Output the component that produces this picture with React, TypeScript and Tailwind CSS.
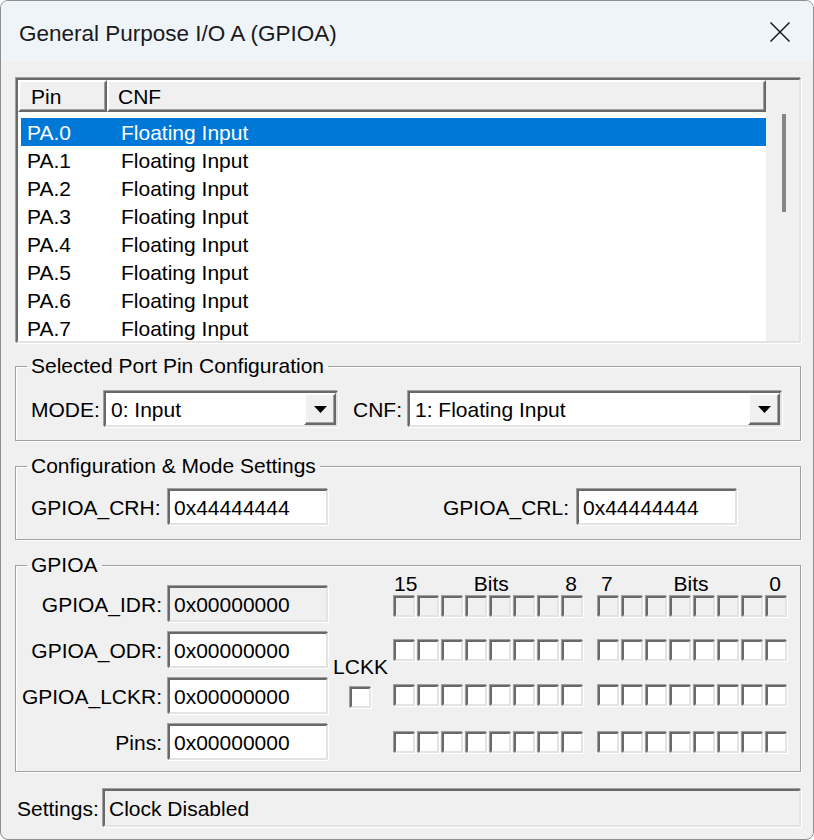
import React from "react";

const sunken =
  "border-2 border-t-[#696969] border-l-[#696969] border-b-[#e3e3e3] border-r-[#e3e3e3] shadow-[-1px_-1px_0_#a0a0a0,1px_1px_0_#ffffff]";
const raised =
  "border-2 border-t-white border-l-white border-b-[#696969] border-r-[#696969] shadow-[inset_-1px_-1px_0_#a0a0a0]";
const group =
  "border border-[#a0a0a0] shadow-[inset_1px_1px_0_#ffffff,1px_1px_0_#ffffff]";

const pins = ["PA.0", "PA.1", "PA.2", "PA.3", "PA.4", "PA.5", "PA.6", "PA.7"];

function TextBox({ value, gray = false, className = "" }: { value: string; gray?: boolean; className?: string }) {
  return (
    <div className={`${sunken} ${gray ? "bg-[#f0f0f0]" : "bg-white"} h-[36px] flex items-center pl-[4px] ${className}`}>
      {value}
    </div>
  );
}

function Combo({ value, className = "" }: { value: string; className?: string }) {
  return (
    <div className={`${sunken} bg-white h-[36px] flex items-stretch ${className}`}>
      <div className="flex-1 flex items-center pl-[5px]">{value}</div>
      <div className={`${raised} w-[32px] bg-[#f0f0f0] flex items-center justify-center`}>
        <svg width="13" height="7" viewBox="0 0 13 7">
          <polygon points="0,0 13,0 6.5,7" fill="#000" />
        </svg>
      </div>
    </div>
  );
}

function Check({ gray = false }: { gray?: boolean }) {
  return <div className={`${sunken} ${gray ? "bg-[#f0f0f0]" : "bg-white"} w-[21px] h-[21px]`} />;
}

function BitRow({ gray = false, className = "" }: { gray?: boolean; className?: string }) {
  return (
    <div className={`flex ${className}`}>
      <div className="flex gap-[3px]">
        {Array.from({ length: 8 }).map((_, i) => (
          <Check key={i} gray={gray} />
        ))}
      </div>
      <div className="flex gap-[3px] ml-[15px]">
        {Array.from({ length: 8 }).map((_, i) => (
          <Check key={i} gray={gray} />
        ))}
      </div>
    </div>
  );
}

export default function App() {
  return (
    <div className="w-[814px] h-[840px] overflow-hidden rounded-lg border border-[#8f8f8f] bg-[#f0f0f0] font-['Liberation_Sans',Arial,sans-serif] text-[21px] text-black leading-none">
      {/* title bar */}
      <div className="h-[61px] bg-[#eff4f9] flex items-center justify-between pl-[18px] pr-[22px]">
        <span className="mt-[5px] text-[22.5px] text-[#1a1a1a]">General Purpose I/O A (GPIOA)</span>
        <svg width="22" height="22" viewBox="0 0 22 22">
          <path d="M1.5 1.5 L20.5 20.5 M20.5 1.5 L1.5 20.5" stroke="#1a1a1a" strokeWidth="1.5" fill="none" />
        </svg>
      </div>

      <div className="pl-[14px] flex flex-col items-start">
        {/* pin list */}
        <div className={`${sunken} ml-[1px] mt-[16px] w-[785px] h-[265px] bg-white flex overflow-hidden`}>
          <div className="w-[748px] flex flex-col overflow-hidden">
            <div className="h-[32px] flex shrink-0 bg-[#f0f0f0]">
              <div className={`${raised} w-[89px] flex items-center pl-[11px]`}>Pin</div>
              <div className={`${raised} flex-1 flex items-center pl-[9px]`}>CNF</div>
            </div>
            <div className="pt-[6px] pl-[3px]">
              {pins.map((p, i) => (
                <div
                  key={p}
                  className={`h-[28px] w-[745px] flex items-center ${i === 0 ? "bg-[#0078d7] text-white" : ""}`}
                >
                  <span className="w-[100px] pl-[6px]">{p}</span>
                  <span>Floating Input</span>
                </div>
              ))}
            </div>
          </div>
          <div className="w-[33px] bg-[#f0f0f0]">
            <div className="mt-[34px] ml-[16px] w-[4px] h-[98px] bg-[#858585]" />
          </div>
        </div>

        {/* selected port pin configuration */}
        <fieldset className={`${group} mt-[11px] w-[786px]`}>
          <legend className="ml-[11px] px-[4px] leading-[24px]">Selected Port Pin Configuration</legend>
          <div className="flex items-center pl-[15px] pt-[13px] pb-[13px]">
            <span className="w-[73px]">MODE:</span>
            <Combo value="0: Input" className="w-[234px]" />
            <span className="ml-[15px] w-[55px]">CNF:</span>
            <Combo value="1: Floating Input" className="w-[374px]" />
          </div>
        </fieldset>

        {/* configuration & mode settings */}
        <fieldset className={`${group} mt-[13px] w-[786px]`}>
          <legend className="ml-[11px] px-[4px] leading-[24px]">Configuration &amp; Mode Settings</legend>
          <div className="flex items-center pl-[15px] pt-[11px] pb-[14px]">
            <span className="w-[137px]">GPIOA_CRH:</span>
            <TextBox value="0x44444444" className="w-[160px]" />
            <span className="ml-[115px] w-[134px]">GPIOA_CRL:</span>
            <TextBox value="0x44444444" className="w-[160px]" />
          </div>
        </fieldset>

        {/* GPIOA */}
        <fieldset className={`${group} mt-[13px] w-[786px]`}>
          <legend className="ml-[11px] px-[4px] leading-[24px]">GPIOA</legend>
          <div className="flex items-start pb-[11px]">
            <div className="flex flex-col gap-[10px] pt-[9px]">
              {[
                ["GPIOA_IDR:", true],
                ["GPIOA_ODR:", false],
                ["GPIOA_LCKR:", false],
                ["Pins:", false],
              ].map(([label, gray]) => (
                <div key={label as string} className="flex items-center">
                  <span className="w-[146px] text-right">{label as string}</span>
                  <TextBox value="0x00000000" gray={gray as boolean} className="ml-[6px] w-[160px]" />
                </div>
              ))}
            </div>

            <div className="ml-[5px] w-[55px] flex flex-col items-center pt-[79px]">
              <span className="leading-[21px]">LCKK</span>
              <div className="mt-[10px]">
                <Check />
              </div>
            </div>

            <div className="ml-[6px] -mt-[5px] flex flex-col">
              <div className="h-[22px] flex items-center">
                <div className="w-[189px] flex justify-between pr-[6px]">
                  <span>15</span>
                  <span>Bits</span>
                  <span>8</span>
                </div>
                <div className="w-[189px] ml-[15px] flex justify-between pl-[3px] pr-[6px]">
                  <span>7</span>
                  <span>Bits</span>
                  <span>0</span>
                </div>
              </div>
              <BitRow gray className="mt-[2px]" />
              <BitRow className="mt-[23px]" />
              <BitRow className="mt-[24px]" />
              <BitRow className="mt-[26px]" />
            </div>
          </div>
        </fieldset>

        {/* status */}
        <div className="flex items-center mt-[17px]">
          <span className="ml-[2px] w-[86px]">Settings:</span>
          <TextBox value="Clock Disabled" gray className="w-[698px] h-[38px]" />
        </div>
      </div>
    </div>
  );
}
